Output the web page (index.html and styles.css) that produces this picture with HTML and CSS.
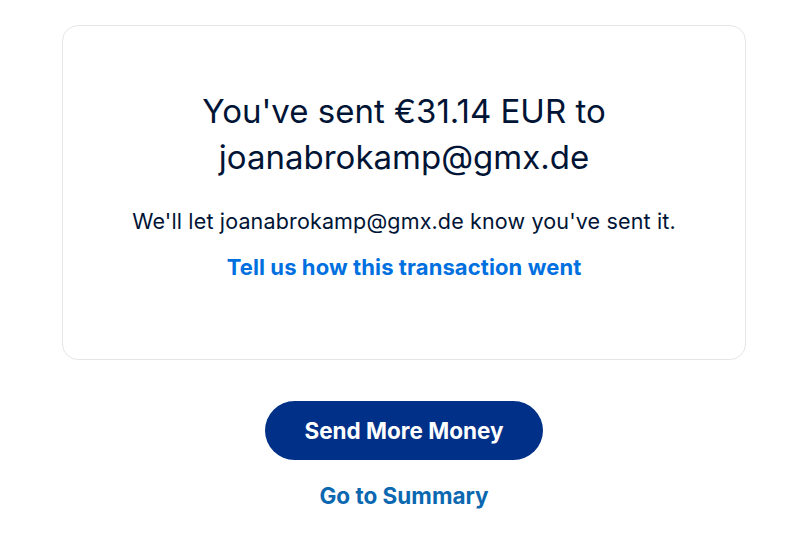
FILE: index.html
```html
<!DOCTYPE html>
<html>
<head>
<meta charset="utf-8">
<link rel="stylesheet" href="styles.css">
</head>
<body>
<main class="page">
  <section class="card">
    <h1 class="title">You've sent €31.14 EUR to joanabrokamp@gmx.de</h1>
    <p class="note">We'll let joanabrokamp@gmx.de know you've sent it.</p>
    <a class="feedback" href="#">Tell us how this transaction went</a>
  </section>
  <div class="actions">
    <a class="primary" href="#">Send More Money</a>
    <a class="secondary" href="#">Go to Summary</a>
  </div>
</main>
</body>
</html>
```
FILE: styles.css
```css
html, body {
  margin: 0;
  padding: 0;
  background: #ffffff;
}
body {
  font-family: "Inter", "Liberation Sans", sans-serif;
  color: #001435;
}
.page {
  width: 684px;
  margin-left: 62px;
  padding-top: 25px;
  display: flex;
  flex-direction: column;
  align-items: center;
}
.card {
  box-sizing: border-box;
  width: 684px;
  height: 335px;
  border: 1px solid #e6e6e6;
  border-radius: 16px;
  display: flex;
  flex-direction: column;
  align-items: center;
  padding-top: 62px;
}
.title {
  margin: 0;
  width: 440px;
  text-align: center;
  font-size: 33px;
  font-weight: 400;
  line-height: 46px;
  color: #001435;
}
.note {
  margin: 27px 0 0;
  font-size: 21.5px;
  letter-spacing: 0.15px;
  line-height: 28px;
  color: #001435;
}
.feedback {
  margin-top: 18px;
  font-size: 22px;
  letter-spacing: 0.1px;
  line-height: 28px;
  font-weight: 700;
  color: #0070e0;
  text-decoration: none;
}
.actions {
  display: flex;
  flex-direction: column;
  align-items: center;
  margin-top: 41px;
}
.primary {
  width: 278px;
  height: 59px;
  border-radius: 30px;
  background: #003087;
  color: #ffffff;
  font-size: 22.5px;
  font-weight: 700;
  display: flex;
  align-items: center;
  justify-content: center;
  text-decoration: none;
}
.secondary {
  margin-top: 22px;
  font-size: 22.5px;
  line-height: 28px;
  font-weight: 700;
  color: #0b68b0;
  text-decoration: none;
}
```
